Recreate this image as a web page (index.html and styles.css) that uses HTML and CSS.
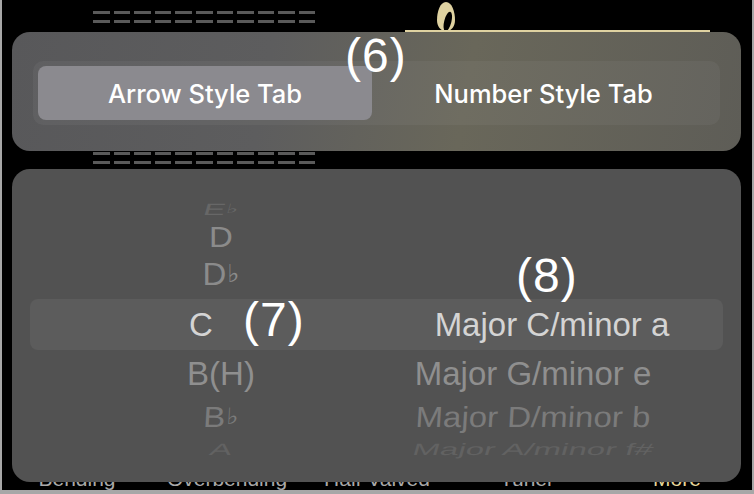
FILE: index.html
```html
<!DOCTYPE html>
<html lang="en">
<head>
    <meta charset="UTF-8">
    <meta name="viewport" content="width=device-width, initial-scale=1.0">
    <title>Tab Settings</title>
    <link rel="stylesheet" href="styles.css">
</head>
<body>
    <div class="screen">
        <!-- page under the sheet -->
        <div class="top-strip">
            <div class="staff">
                <div class="dash-row"></div>
                <div class="dash-row"></div>
            </div>
            <div class="gold">
                <svg class="note" width="22" height="29" viewBox="0 0 22 29">
                    <path d="M11 0 C17 0 20 10 20 18 C20 24 17 29 11 29 C5 29 2 24 2 18 C2 10 5 0 11 0 Z" fill="#dfd2a1"/>
                    <ellipse cx="12.8" cy="19.5" rx="3.6" ry="10" transform="rotate(14 12.8 19.5)" fill="#000"/>
                </svg>
                <div class="gold-line"></div>
            </div>
        </div>
        <div class="staff staff-mid">
            <div class="dash-row"></div>
            <div class="dash-row"></div>
        </div>
        <div class="tab-bar">
            <span>Bending</span>
            <span>Overbending</span>
            <span>Half Valved</span>
            <span>Tuner</span>
            <span class="active">More</span>
        </div>

        <!-- settings sheet -->
        <div class="sheet">
            <div class="panel style-panel">
                <div class="segment">
                    <div class="seg-item selected">Arrow Style Tab</div>
                    <div class="seg-item">Number Style Tab</div>
                </div>
                <div class="callout callout-6">(6)</div>
            </div>
            <div class="panel picker-panel">
                <div class="picker">
                    <div class="row r-eb" style="height:28px"><span class="key">E<i class="flat">♭</i></span><span class="scale"></span></div>
                    <div class="row r-d" style="height:30px"><span class="key">D</span><span class="scale"></span></div>
                    <div class="row r-db" style="height:51px"><span class="key">D<i class="flat">♭</i></span><span class="scale"></span></div>
                    <div class="row r-c sel" style="height:51px"><span class="key">C</span><span class="scale">Major C/minor a</span></div>
                    <div class="row r-b" style="height:48px"><span class="key">B(H)</span><span class="scale">Major G/minor e</span></div>
                    <div class="row r-bb" style="height:32px"><span class="key">B<i class="flat">♭</i></span><span class="scale">Major D/minor b</span></div>
                    <div class="row r-a" style="height:32px"><span class="key">A</span><span class="scale">Major A/minor f#</span></div>
                </div>
                <div class="callout callout-7">(7)</div>
                <div class="callout callout-8">(8)</div>
            </div>
        </div>
    </div>
</body>
</html>
```
FILE: styles.css
```css
body {
    margin: 0;
    padding: 0;
    background-color: #a7a7a7;
    font-family: "Liberation Sans", Arial, sans-serif;
}
.screen {
    margin-left: 2px;
    width: 750px;
    height: 490px;
    background-color: #000;
    position: relative;
    overflow: hidden;
    display: flex;
    flex-direction: column;
}
.top-strip {
    display: flex;
    height: 32px;
}
.staff {
    margin-left: 91px;
    padding-top: 11px;
}
.dash-row {
    width: 222px;
    height: 3px;
    margin-bottom: 6px;
    background: repeating-linear-gradient(90deg, #5a5a5a 0 16.6px, transparent 16.6px 20.6px);
}
.gold {
    margin-left: 90px;
    width: 305px;
    display: flex;
    flex-direction: column;
    justify-content: flex-end;
}
.note {
    display: block;
    margin-left: 30px;
    margin-bottom: -1px;
}
.gold-line {
    height: 2px;
    background-color: #dfd2a1;
}
.staff-mid {
    padding-top: 120px;
}
.tab-bar {
    margin-top: auto;
    height: 22px;
    display: grid;
    grid-template-columns: repeat(5, 1fr);
    font-size: 21px;
    line-height: 22px;
    color: #a9a9a9;
    text-align: center;
}
.tab-bar .active {
    color: #e6d69b;
}

/* sheet */
.sheet {
    position: absolute;
    top: 0;
    left: 0;
    right: 0;
    bottom: 0;
    padding: 32px 11px 8px 10px;
    display: flex;
    flex-direction: column;
    gap: 18px;
}
.panel {
    position: relative;
    border-radius: 18px;
}
.style-panel {
    height: 119px;
    box-sizing: border-box;
    padding: 29px 21px 0 21px;
    background: linear-gradient(100deg, #58585a 0%, #5d5d5e 35%, #69675a 62%, #5e5d57 100%);
}
.segment {
    height: 64px;
    box-sizing: border-box;
    padding: 5px;
    border-radius: 10px;
    background-color: rgba(255, 255, 255, 0.045);
    display: grid;
    grid-template-columns: 334px 1fr;
}
.seg-item {
    display: flex;
    align-items: center;
    justify-content: center;
    border-radius: 8px;
    color: #fff;
    font-family: Inter, "Liberation Sans", sans-serif;
    font-weight: 500;
    font-size: 25.5px;
}
.seg-item.selected {
    background-color: #8b8a8f;
}
.picker-panel {
    flex: 1;
    padding: 21px 18px 0 18px;
    background-color: #525252;
}
.row {
    display: grid;
    grid-template-columns: 382px 242px;
    align-items: center;
    font-size: 33px;
    text-align: center;
    white-space: nowrap;
    border-radius: 8px;
}
.row span {
    display: block;
}
.flat {
    font-style: normal;
    font-weight: 700;
    font-family: "DejaVu Sans", sans-serif;
    font-size: 0.78em;
    vertical-align: 0.12em;
    margin-left: 1px;
}
.row.sel {
    background-color: #5c5c5c;
    color: #d4d4d4;
}
.row.sel .key {
    transform: translateX(-20px);
}
.row.sel .scale {
    transform: translateX(19px);
}
.r-eb {
    color: #676767;
}
.r-eb span {
    transform: scaleY(0.5) skewX(-8deg);
}
.r-d, .r-db {
    color: #8b8b8b;
}
.r-d span {
    transform: scaleY(0.88);
}
.r-db span {
    transform: scaleY(0.96);
}
.r-b {
    color: #8f8f8f;
}
.r-bb {
    color: #7b7b7b;
}
.r-bb span {
    transform: scaleY(0.88) skewX(-3deg);
}
.r-a {
    color: #626262;
}
.r-a span {
    transform: scaleY(0.5) skewX(-8deg);
}
.callout {
    position: absolute;
    color: #fff;
    font-size: 48px;
    line-height: 1;
    letter-spacing: 1px;
}
.callout-6 {
    left: 333px;
    top: 0;
}
.callout-7 {
    left: 231px;
    top: 127px;
}
.callout-8 {
    left: 504px;
    top: 83px;
}
```
